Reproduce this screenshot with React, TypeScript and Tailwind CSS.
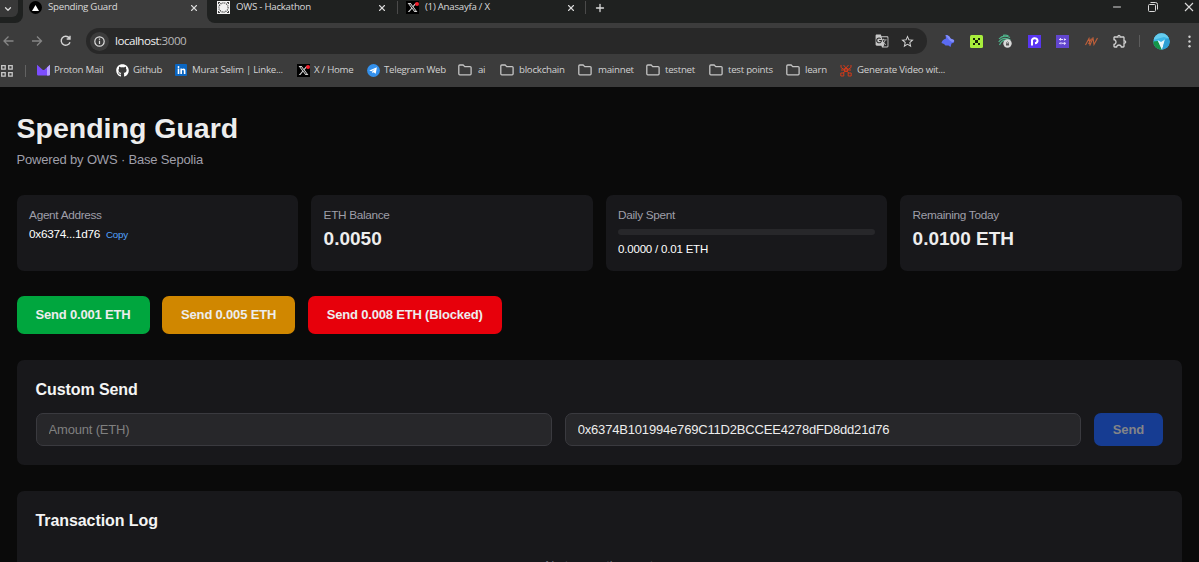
import React from "react";
import { FaGithub } from "react-icons/fa";
import { FaXTwitter, FaLinkedinIn } from "react-icons/fa6";
import { ChevronDown, X, Plus, Minus } from "lucide-react";
import { MdGTranslate, MdOutlineExtension, MdStarBorder } from "react-icons/md";

function XLogo() {
  return (
    <span className="relative flex h-[13px] w-[13px] shrink-0 items-center justify-center bg-black text-[#d5d5d5]">
      <FaXTwitter size={11} />
      <span className="absolute right-0 top-[1px] h-[4px] w-[4px] rounded-full bg-[#f4212e]" />
    </span>
  );
}

function Folder() {
  return (
    <svg width="14" height="12" viewBox="0 0 14 12" fill="none" stroke="#c4c4c4" strokeWidth="1.3" strokeLinejoin="round" className="shrink-0">
      <path d="M.8 9.8V2q0-1 1-1h3.4l1.5 1.6h5.4q1 0 1 1v6.2q0 1-1 1H1.8q-1 0-1-1Z" />
    </svg>
  );
}

function Proton() {
  return (
    <svg width="13" height="12" viewBox="0 0 13 12" className="shrink-0">
      <path d="M0 .8 5.300 5.400q1.200 1 2.400 0L13 .8v9.400q0 1.300-1.300 1.300H1.300Q0 11.500 0 10.200Z" fill="#7c4dff" />
      <path d="M10 3.400 13 .8v9.400q0 1.300-1.300 1.300H10Z" fill="#b9a3ff" />
    </svg>
  );
}

function Telegram() {
  return (
    <svg width="13" height="13" viewBox="0 0 13 13" className="shrink-0">
      <circle cx="6.500" cy="6.500" r="6.400" fill="#3390ec" />
      <path d="M2.300 6.400 9.900 3.300 8.700 9.700 6.500 8.200 5.400 9.200 5.200 7.400 8 4.900 4.400 7.200Z" fill="#fff" />
    </svg>
  );
}

function RedKnot() {
  return (
    <svg width="12" height="13" viewBox="0 0 12 13" fill="none" stroke="#d03a1a" strokeWidth="1" className="shrink-0">
      <path d="M1 1v2.500L4 5.500M11 1v2.500L8 5.500M3.500 1l2.500 3 2.500-3M1 6h10M4.500 4.500h3v3h-3ZM5 7.500 3 9M7 7.500 9 9" />
      <path d="M.800 9h3v3h-3ZM8.200 9h3v3h-3Z" />
    </svg>
  );
}

const bookmarks: { label: string; icon: React.ReactNode; width: string; gap: string }[] = [
  { label: "Proton Mail", icon: <Proton />, width: "w-[79px]", gap: "gap-[4px]" },
  { label: "Github", icon: <FaGithub size={13} color="#fff" className="shrink-0" />, width: "w-[59px]", gap: "gap-[4px]" },
  {
    label: "Murat Selim | Linke...",
    icon: (
      <span className="flex h-[12px] w-[12px] shrink-0 items-center justify-center rounded-[1px] bg-[#0a66c2] text-white">
        <FaLinkedinIn size={9} />
      </span>
    ),
    width: "w-[122px]",
    gap: "gap-[5px]",
  },
  { label: "X / Home", icon: <XLogo />, width: "w-[70px]", gap: "gap-[4px]" },
  { label: "Telegram Web", icon: <Telegram />, width: "w-[91px]", gap: "gap-[4px]" },
  { label: "ai", icon: <Folder />, width: "w-[42px]", gap: "gap-[6px]" },
  { label: "blockchain", icon: <Folder />, width: "w-[78px]", gap: "gap-[5px]" },
  { label: "mainnet", icon: <Folder />, width: "w-[68px]", gap: "gap-[6px]" },
  { label: "testnet", icon: <Folder />, width: "w-[63px]", gap: "gap-[5px]" },
  { label: "test points", icon: <Folder />, width: "w-[77px]", gap: "gap-[5px]" },
  { label: "learn", icon: <Folder />, width: "w-[54px]", gap: "gap-[5px]" },
  { label: "Generate Video wit...", icon: <RedKnot />, width: "w-[110px]", gap: "gap-[5px]" },
];

function TabStrip() {
  return (
    <div className="flex h-[23px] shrink-0 text-[#dadada]">
      <div className="h-full w-[23px] shrink-0 rounded-br-[8px] bg-[#1f2120]">
        <div className="flex h-[17px] w-[18px] items-center justify-center rounded-br-[6px] bg-[#383838] pr-[2px] pt-[1px]">
          <ChevronDown size={10} strokeWidth={3} />
        </div>
      </div>
      <div className="flex h-[15px] w-[184px] shrink-0 items-center pl-[6px]">
        <span className="flex h-[13px] w-[13px] items-center justify-center rounded-full bg-black">
          <svg width="7" height="6" viewBox="0 0 7 6">
            <path d="M3.500 0 7 6H0Z" fill="#fff" />
          </svg>
        </span>
        <span className="ml-[6px] w-[141px]">Spending Guard</span>
        <X size={10} strokeWidth={2.6} />
      </div>
      <div className="flex h-full grow rounded-bl-[8px] bg-[#1f2120]">
        <div className="flex h-[15px] w-[378px] items-center pl-[10px]">
          <svg width="13" height="13" viewBox="0 0 13 13">
            <rect width="13" height="13" fill="#f2f2f2" />
            <circle cx="6.500" cy="6.500" r="4.600" fill="none" stroke="#333" strokeWidth="1.300" strokeDasharray="1 1" />
            <path d="M1 1h2v1H2v1H1ZM10 1h2v2h-1V2h-1ZM1 10h1v1h1v1H1ZM11 10h1v2h-2v-1h1Z" fill="#444" />
          </svg>
          <span className="ml-[6px] w-[141px]">OWS - Hackathon</span>
          <X size={10} strokeWidth={2.6} />
          <span className="ml-[10px] h-[13px] w-[1px] bg-[#4a4a4a]" />
          <span className="ml-[8px]">
            <XLogo />
          </span>
          <span className="ml-[6px] w-[141px]">(1) Anasayfa / X</span>
          <X size={10} strokeWidth={2.6} className="shrink-0" />
        </div>
        <div className="flex h-[15px] grow items-center">
          <span className="h-[13px] w-[1px] bg-[#4a4a4a]" />
          <Plus size={12} strokeWidth={2.6} className="ml-[8px]" />
        </div>
        <div className="flex h-[14px] items-center pr-[5px]">
          <Minus size={12} strokeWidth={2} className="-mt-[1px] mr-[25px]" />
          <svg width="10" height="10" viewBox="0 0 10 10" fill="none" stroke="#dadada" className="mr-[26px]">
            <rect x=".5" y="2.500" width="7" height="7" rx="1" />
            <path d="M2.500 .5h5q2 0 2 2v5" />
          </svg>
          <svg width="10" height="10" viewBox="0 0 10 10" stroke="#dadada" strokeWidth="1.100">
            <path d="M1 1l8 8M9 1 1 9" />
          </svg>
        </div>
      </div>
    </div>
  );
}

function Extensions() {
  return (
    <div className="flex items-center">
      <div className="flex w-[200px] items-center">
        <span className="flex w-[28.600px] justify-center">
          <svg width="14" height="14" viewBox="0 0 14 14">
            <path d="M.5 9Q1 5.500 5 4.500L4.500 1Q8.500 1 9.500 4.500L13 6Q14 9 10.500 9.500L9.500 13 7.500 11.500 4.500 11.500 3 10Z" fill="#5a6bf2" />
            <path d="M4.500 1Q8.500 1 9.500 4.500L13 6Q13.500 8 11 8 8 6 7 4.500Z" fill="#8490fb" />
          </svg>
        </span>
        <span className="flex w-[28.600px] justify-center">
          <svg width="13" height="13" viewBox="0 0 13 13">
            <rect width="13" height="13" rx="1.500" fill="#a8ee3c" />
            <path d="M3 3h2v2H3ZM8 3h2v2H8ZM5 5h3v3H5ZM3 8h2v2H3ZM8 8h2v2H8Z" fill="#172508" />
          </svg>
        </span>
        <span className="flex w-[28.600px] justify-center">
          <svg width="14" height="14" viewBox="0 0 14 14" fill="none">
            <path d="M1 5Q5 0 12 3.500M.7 8Q5 2 12.500 6M1.500 11Q4 5 10 6.500M5 1.300Q8 .5 10.500 2" stroke="#4fb58c" strokeWidth="1.200" />
            <circle cx="9.500" cy="9.500" r="4.200" fill="#d9d9d9" />
            <path d="M8 9.300h3v2.200H8Z" fill="#555" />
            <path d="M8.500 9.300V8.500q1-1.600 2 0v.8" stroke="#555" strokeWidth=".7" />
          </svg>
        </span>
        <span className="flex w-[28.600px] justify-center">
          <svg width="13" height="13" viewBox="0 0 13 13">
            <rect width="13" height="13" fill="#5936f1" />
            <path d="M4 10.500V6.300A2.800 2.500 0 1 1 7 8.200" fill="none" stroke="#fff" strokeWidth="2" />
          </svg>
        </span>
        <span className="flex w-[28.600px] justify-center">
          <svg width="13" height="13" viewBox="0 0 13 13">
            <rect width="13" height="13" fill="#6246cf" />
            <path d="M3 4.500h4M6 8.300h4M8.500 4.500H10M3 8.300h1.500" stroke="#e5dcff" strokeWidth="1" />
            <path d="M4.500 3v2.500M8.500 3.500v2M5 7.300v2M8.500 7.300v2.500" stroke="#e5dcff" strokeWidth="1.200" />
          </svg>
        </span>
        <span className="flex w-[28.600px] justify-center">
          <svg width="13" height="9" viewBox="0 0 13 9" fill="none" stroke="#c0603a" strokeWidth="1.100">
            <path d="M.5 8 4 1.500 5 8 8 1 9 7.500 12.500 1M6.500 1.500 3.500 7" />
          </svg>
        </span>
        <span className="flex w-[28.600px] justify-center">
          <MdOutlineExtension size={16} color="#d0d0d0" />
        </span>
      </div>
      <span className="ml-[5px] h-[12px] w-[1px] bg-[#5c5c5c]" />
      <svg width="17" height="17" viewBox="0 0 17 17" className="ml-[13px]">
        <defs>
          <clipPath id="avatar">
            <circle cx="8.500" cy="8.500" r="8.200" />
          </clipPath>
        </defs>
        <g clipPath="url(#avatar)">
          <rect width="17" height="17" fill="#3bb6e6" />
          <path d="M0 0h17v6L11 4 0 7Z" fill="#65ccee" />
          <path d="M0 8.500 5 8l4 9H0Z" fill="#159447" />
          <path d="M4.500 7 8 9l4-2.500-3 10.500Z" fill="#e9f7fb" />
          <path d="M12 6.500 17 5v9l-8 3Z" fill="#2f9fd4" />
        </g>
      </svg>
      <svg width="3" height="13" viewBox="0 0 3 13" fill="#d0d0d0" className="ml-[18px]">
        <circle cx="1.500" cy="1.800" r="1.200" />
        <circle cx="1.500" cy="6.500" r="1.200" />
        <circle cx="1.500" cy="11.200" r="1.200" />
      </svg>
    </div>
  );
}

function Toolbar() {
  return (
    <div className="flex h-[36px] shrink-0 items-center">
      <svg width="74" height="12" viewBox="0 0 74 12" fill="none" strokeWidth="1.300" className="shrink-0">
        <path d="M13.500 6H4.500M8.500 1.500 4 6l4.500 4.500" stroke="#858585" />
        <path d="M32 6h9.500M37 1.500 41.500 6 37 10.500" stroke="#858585" />
        <path d="M69.300 3A4.500 4.500 0 1 0 70 7.200M70 .8V4h-3.300" stroke="#d4d4d4" strokeWidth="1.400" />
      </svg>
      <div className="ml-[12px] flex h-[26px] w-[841px] shrink-0 items-center rounded-full bg-[#282828] pl-[4px]">
        <span className="flex h-[19px] w-[19px] items-center justify-center rounded-full bg-[#3c3c3c]">
          <svg width="11" height="11" viewBox="0 0 11 11" fill="none" stroke="#dedede" strokeWidth="1.200">
            <circle cx="5.500" cy="5.500" r="4.700" />
            <path d="M5.500 4.800v3.200M5.500 2.600v1.200" />
          </svg>
        </span>
        <span className="ml-[6px] grow text-[11.600px] tracking-[-0.500px] text-[#f0f0f0]">
          localhost<span className="text-[#b8b8b8]">:3000</span>
        </span>
        <MdGTranslate size={14} color="#c8c8c8" className="mr-[11px]" />
        <MdStarBorder size={15} color="#d4d4d4" className="mr-[12px]" />
      </div>
      <div className="ml-[7px]">
        <Extensions />
      </div>
    </div>
  );
}

function BookmarkBar() {
  return (
    <div className="flex h-[28px] shrink-0 items-center pb-[5px] text-[#d2d2d2]">
      <svg width="12" height="12" viewBox="0 0 12 12" fill="none" stroke="#c8c8c8" strokeWidth="1.300" className="ml-[1px] shrink-0">
        <path d="M.7.700h3.500v3.500H.7ZM7.700.700h3.500v3.500H7.700ZM.7 7.700h3.500v3.500H.7ZM7.700 7.700h3.500v3.500H7.700Z" />
      </svg>
      <span className="ml-[12px] mr-[11px] h-[12px] w-[1px] shrink-0 bg-[#626262]" />
      {bookmarks.map((b) => (
        <div key={b.label} className={`flex shrink-0 items-center whitespace-nowrap ${b.width} ${b.gap}`}>
          {b.icon}
          <span>{b.label}</span>
        </div>
      ))}
    </div>
  );
}

function Card({ label, children }: { label: string; children: React.ReactNode }) {
  return (
    <div className="h-[76px] rounded-[7px] bg-[#18181b] px-[12.600px] pt-[12px]">
      <div className="text-[11.800px] leading-[16px] tracking-[-0.320px] text-[#9f9fa9]">{label}</div>
      {children}
    </div>
  );
}

export default function App() {
  return (
    <div className="flex h-[562px] w-[1199px] flex-col overflow-hidden bg-[#0a0a0a] font-['Liberation_Sans',Arial,sans-serif] text-[#ededed]">
      <header className="flex h-[87px] shrink-0 flex-col whitespace-nowrap bg-[#3c3c3c] font-['Open_Sans','Noto_Sans',sans-serif] text-[9.700px] tracking-[-0.260px]">
        <TabStrip />
        <Toolbar />
        <BookmarkBar />
      </header>
      <main className="flex grow flex-col pl-[16.500px] pr-[17.100px] pt-[25px]">
        <h1 className="text-[28.500px] font-bold leading-[32px]">Spending Guard</h1>
        <p className="mt-[6px] text-[13px] leading-[19px] tracking-[-0.170px] text-[#9f9fa9]">Powered by OWS · Base Sepolia</p>

        <section className="mt-[25.500px] grid shrink-0 grid-cols-4 gap-[12.600px]">
          <Card label="Agent Address">
            <div className="mt-[3px] flex items-center gap-[6px] leading-[16px]">
              <span className="text-[11.800px] tracking-[-0.300px] text-white">0x6374...1d76</span>
              <span className="pt-[1px] text-[9.800px] tracking-[-0.250px] text-[#51a2ff]">Copy</span>
            </div>
          </Card>
          <Card label="ETH Balance">
            <div className="mt-[4px] text-[19px] font-bold leading-[24px]">0.0050</div>
          </Card>
          <Card label="Daily Spent">
            <div className="mt-[6px] h-[6.500px] rounded-full bg-[#27272a]" />
            <div className="mt-[6px] text-[11.500px] leading-[16px] tracking-[-0.200px] text-white">0.0000 / 0.01 ETH</div>
          </Card>
          <Card label="Remaining Today">
            <div className="mt-[4px] text-[19px] font-bold leading-[24px]">0.0100 ETH</div>
          </Card>
        </section>

        <section className="mt-[25.500px] flex shrink-0 gap-[12.600px] text-[13px] font-bold tracking-[-0.180px]">
          <button className="h-[38px] w-[133px] rounded-[7px] bg-[#00a63e]">Send 0.001 ETH</button>
          <button className="h-[38px] w-[133px] rounded-[7px] bg-[#d08700]">Send 0.005 ETH</button>
          <button className="h-[38px] w-[194px] rounded-[7px] bg-[#e7000b]">Send 0.008 ETH (Blocked)</button>
        </section>

        <section className="mt-[25.500px] h-[105.500px] shrink-0 rounded-[7px] bg-[#18181b] px-[19px] pt-[19.500px]">
          <h2 className="text-[16px] font-bold leading-[22px] tracking-[-0.080px] text-[#f4f4f4]">Custom Send</h2>
          <div className="mt-[12px] flex h-[33px] gap-[12.600px] text-[13px] tracking-[-0.180px]">
            <input
              className="min-w-0 flex-1 rounded-[7px] border border-[#3a3a3f] bg-[#27272a] px-[12px] pt-px placeholder:text-[#808080]"
              placeholder="Amount (ETH)"
            />
            <input
              className="min-w-0 flex-1 rounded-[7px] border border-[#3a3a3f] bg-[#27272a] px-[12px] pt-px"
              defaultValue="0x6374B101994e769C11D2BCCEE4278dFD8dd21d76"
            />
            <button className="w-[69px] rounded-[7px] bg-[#163c92] pt-px font-bold text-[#838488]">Send</button>
          </div>
        </section>

        <section className="mt-[25.500px] h-[120px] shrink-0 rounded-[7px] bg-[#18181b] px-[19px] pt-[19.500px]">
          <h2 className="text-[16px] font-bold leading-[22px] tracking-[-0.080px] text-[#f4f4f4]">Transaction Log</h2>
          <p className="mt-[25px] text-center text-[12.640px] leading-[19px] text-[#71717b]">No transactions yet</p>
        </section>
      </main>
    </div>
  );
}
